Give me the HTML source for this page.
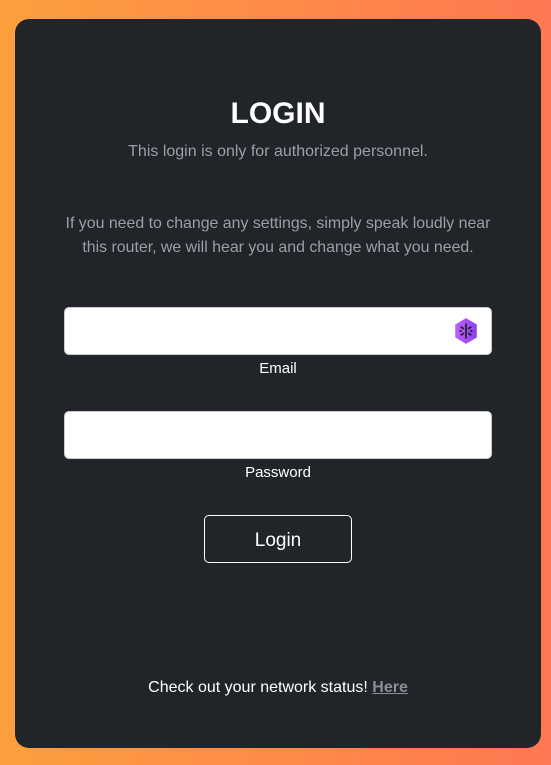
<!DOCTYPE html>
<html><head><style>
*{margin:0;padding:0;box-sizing:border-box}
body{width:551px;height:765px;background:linear-gradient(90deg,#fd9f3e,#fe7752);font-family:"Liberation Sans",sans-serif;position:relative;overflow:hidden}
.card{position:absolute;left:15px;top:19px;width:526px;height:729px;background:#212429;border-radius:14px;color:#fff;text-align:center}
.abs{position:absolute;left:0;width:100%;text-align:center}
h1{font-size:30px;font-weight:bold;top:78px}
.sub{color:#9aa0a6;font-size:16px;top:124px}
.p{color:#9aa0a6;font-size:15.9px;line-height:24px;top:193px}
.inp{position:absolute;left:49px;width:428px;height:48px;background:#fff;border-radius:5px;border:1px solid #ccc}
.lbl{font-size:15px}
.btn{position:absolute;left:189px;top:496px;width:148px;height:48px;border:1px solid #fff;border-radius:5px;font-size:19px;line-height:50px}
.foot{font-size:16px;top:660px}
.foot b{color:#8a8f95;text-decoration:underline}
</style></head><body>
<div class="card">
<h1 class="abs">LOGIN</h1>
<div class="abs sub">This login is only for authorized personnel.</div>
<div class="abs p">If you need to change any settings, simply speak loudly near<br>this router, we will hear you and change what you need.</div>
<div class="inp" style="top:288px">
<svg width="26" height="28" viewBox="0 0 24 26" style="position:absolute;right:12px;top:9px">
<defs><linearGradient id="g" x1="0" x2="1"><stop offset="0" stop-color="#c060f5"/><stop offset="1" stop-color="#8a3ff0"/></linearGradient></defs>
<polygon points="12,1 22,7 22,19 12,25 2,19 2,7" fill="url(#g)"/>
<path d="M12 6v14M7 9l3 2M7 17l3-2M17 9l-3 2M17 17l-3-2M6 13h2M16 13h2" stroke="#222" stroke-width="1.6" fill="none"/>
</svg></div>
<div class="abs lbl" style="top:341px">Email</div>
<div class="inp" style="top:392px"></div>
<div class="abs lbl" style="top:445px">Password</div>
<div class="btn">Login</div>
<div class="abs foot">Check out your network status! <b>Here</b></div>
</div>
</body></html>
